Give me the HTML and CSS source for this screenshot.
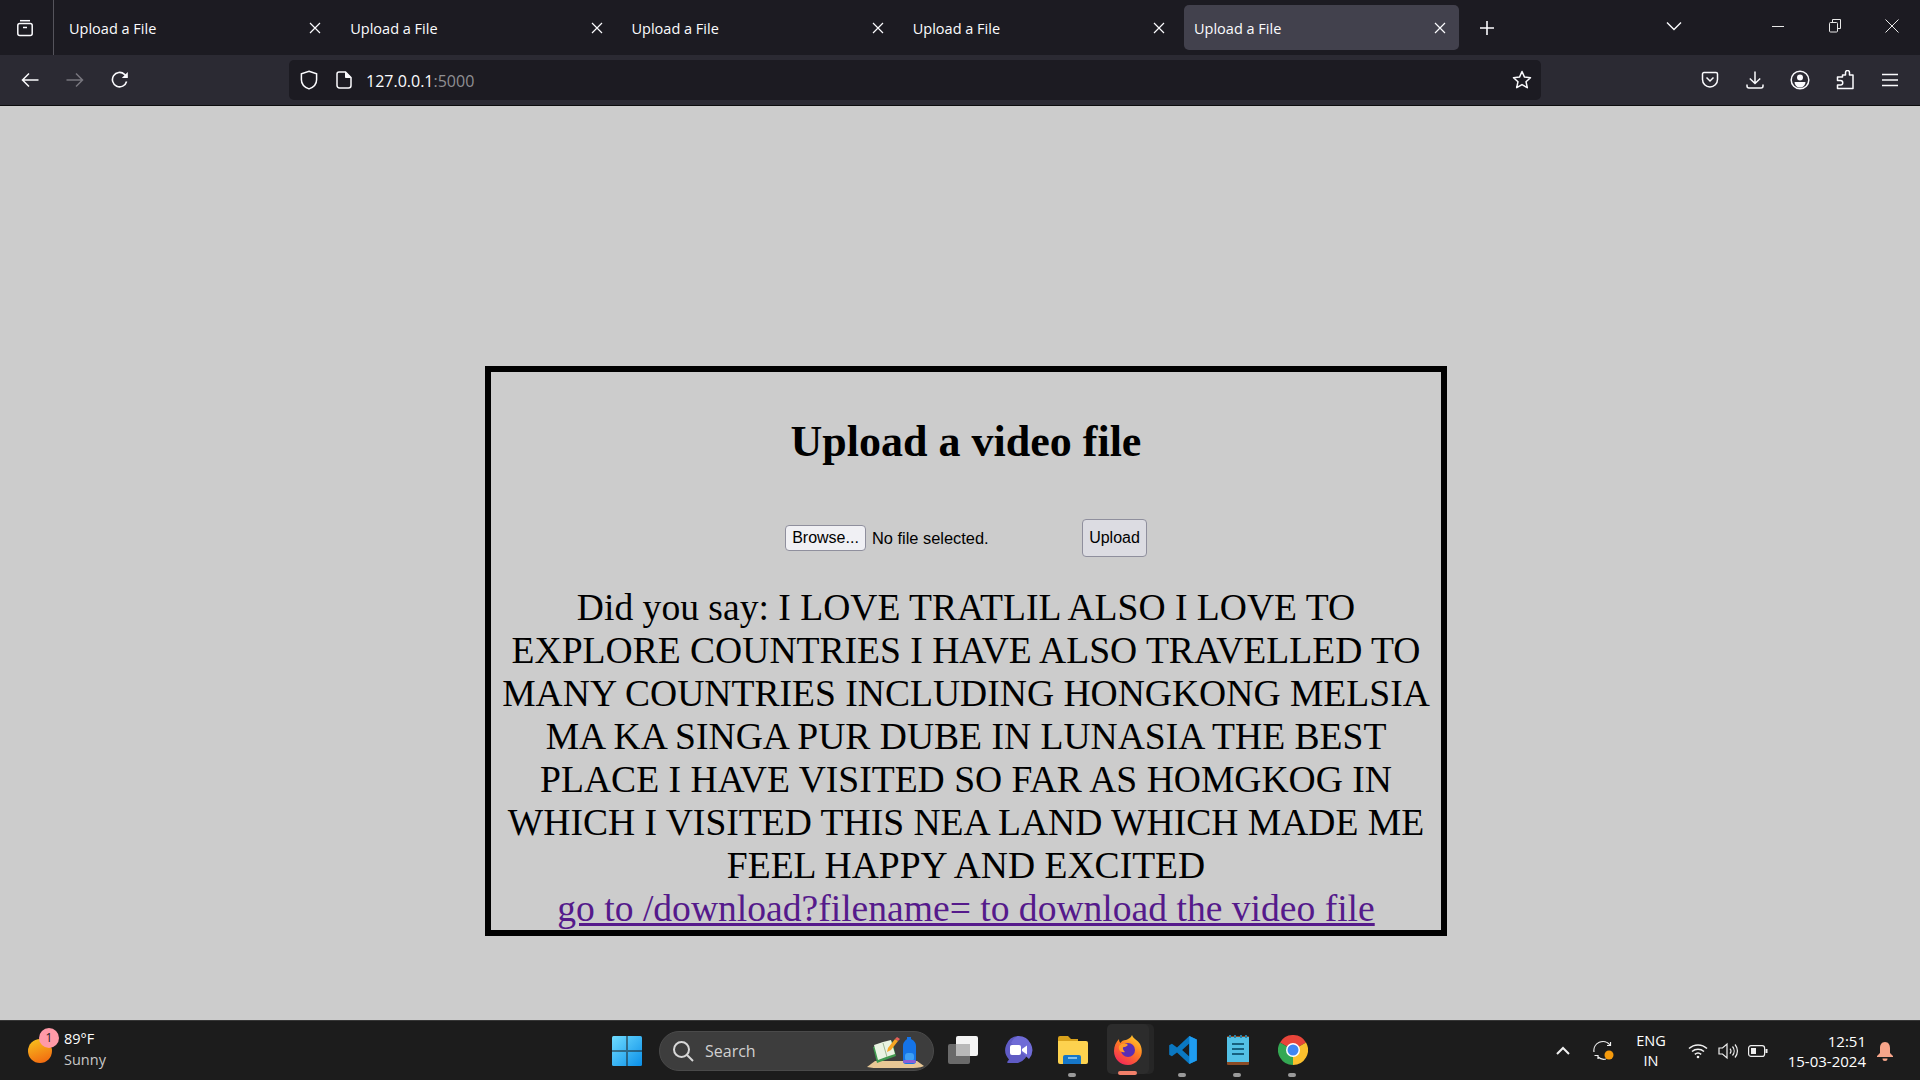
FILE: index.html
```html
<!DOCTYPE html>
<html lang="en">
<head>
    <meta charset="UTF-8">
    <title>Upload a File</title>
    <link rel="stylesheet" href="styles.css">
</head>
<body>
    <!-- tab strip -->
    <div class="tabbar">
        <div class="view-btn">
            <svg width="20" height="20" viewBox="0 0 20 20" fill="none" stroke="#fbfbfe" stroke-width="1.5"><path d="M5 2.7h10"/><rect x="2.8" y="5.5" width="14.4" height="12" rx="2"/><path d="M8 9.5h4"/></svg>
        </div>
        <div class="tabs">
            <div class="tab"><span>Upload a File</span><svg class="x" width="12" height="12" viewBox="0 0 12 12" stroke="#fbfbfe" stroke-width="1.2"><path d="M1 1l10 10M11 1L1 11"/></svg></div>
            <div class="tab"><span>Upload a File</span><svg class="x" width="12" height="12" viewBox="0 0 12 12" stroke="#fbfbfe" stroke-width="1.2"><path d="M1 1l10 10M11 1L1 11"/></svg></div>
            <div class="tab"><span>Upload a File</span><svg class="x" width="12" height="12" viewBox="0 0 12 12" stroke="#fbfbfe" stroke-width="1.2"><path d="M1 1l10 10M11 1L1 11"/></svg></div>
            <div class="tab"><span>Upload a File</span><svg class="x" width="12" height="12" viewBox="0 0 12 12" stroke="#fbfbfe" stroke-width="1.2"><path d="M1 1l10 10M11 1L1 11"/></svg></div>
            <div class="tab active"><span>Upload a File</span><svg class="x" width="12" height="12" viewBox="0 0 12 12" stroke="#fbfbfe" stroke-width="1.2"><path d="M1 1l10 10M11 1L1 11"/></svg></div>
        </div>
        <svg class="plus" width="16" height="16" viewBox="0 0 16 16" stroke="#fbfbfe" stroke-width="1.6"><path d="M8 1v14M1 8h14"/></svg>
        <svg class="chev" width="16" height="10" viewBox="0 0 16 10" fill="none" stroke="#fbfbfe" stroke-width="1.4"><path d="M1 1.5l7 7 7-7"/></svg>
        <div class="win-btns">
            <div class="win-btn"><svg width="12" height="12" viewBox="0 0 12 12" stroke="#e8e8e8"><path d="M0 6.5h12"/></svg></div>
            <div class="win-btn"><svg width="12" height="14" viewBox="0 0 12 14" fill="none" stroke="#e8e8e8"><path d="M3.5 3V.5h8v9H9"/><rect x=".5" y="3.5" width="8" height="9.5" rx="1"/></svg></div>
            <div class="win-btn"><svg width="14" height="14" viewBox="0 0 14 14" stroke="#e8e8e8"><path d="M.5.5l13 13M13.5.5l-13 13"/></svg></div>
        </div>
    </div>

    <!-- nav toolbar -->
    <div class="toolbar">
        <div class="tool"><svg width="18" height="16" viewBox="0 0 18 16" fill="none" stroke="#fbfbfe" stroke-width="1.5"><path d="M17.5 8H1.5M8 1.5L1.5 8 8 14.5"/></svg></div>
        <div class="tool"><svg width="18" height="16" viewBox="0 0 18 16" fill="none" stroke="#77767e" stroke-width="1.5"><path d="M.5 8h16M10 1.5L16.5 8 10 14.5"/></svg></div>
        <div class="tool"><svg width="18" height="18" viewBox="0 0 18 18" fill="none" stroke="#fbfbfe" stroke-width="1.6"><path d="M15.6 10.5A7.2 7.2 0 1 1 13.5 3.3L16 5.6"/><path d="M16.8 1v6h-6z" fill="#fbfbfe" stroke="none"/></svg></div>
        <div class="urlbar">
            <svg width="18" height="20" viewBox="0 0 18 20" fill="none" stroke="#fbfbfe" stroke-width="1.5"><path d="M9 1.2l7.6 2.5v6c0 4.6-3.2 7.6-7.6 9.2-4.4-1.6-7.6-4.6-7.6-9.2v-6z"/></svg>
            <svg class="page" width="16" height="18" viewBox="0 0 16 18" fill="none" stroke="#fbfbfe" stroke-width="1.5"><path d="M3 1h6.5L15 6.5V14.5a2.5 2.5 0 0 1-2.5 2.5h-9A2.5 2.5 0 0 1 1 14.5V3a2 2 0 0 1 2-2z"/><path d="M9.5 1v5.5H15" fill="#fbfbfe" stroke-width="1"/></svg>
            <span class="url">127.0.0.1<span class="port">:5000</span></span>
            <svg class="star" width="20" height="20" viewBox="0 0 20 20" fill="none" stroke="#fbfbfe" stroke-width="1.5" stroke-linejoin="round"><path d="M10 1.5l2.5 5.6 6 .6-4.5 4 1.3 6-5.3-3.1-5.3 3.1 1.3-6-4.5-4 6-.6z"/></svg>
        </div>
        <div class="tools-right">
            <div class="tool"><svg width="18" height="18" viewBox="0 0 18 18" fill="none" stroke="#fbfbfe" stroke-width="1.5"><path d="M3 1.5h12A1.5 1.5 0 0 1 16.5 3v5.5a7.5 7.5 0 0 1-15 0V3A1.5 1.5 0 0 1 3 1.5z"/><path d="M5.5 6.5L9 10l3.5-3.5"/></svg></div>
            <div class="tool"><svg width="18" height="18" viewBox="0 0 18 18" fill="none" stroke="#fbfbfe" stroke-width="1.5"><path d="M9 .5v12M3.8 7.5L9 12.5l5.2-5"/><path d="M1 13.5v1.5A2 2 0 0 0 3 17h12a2 2 0 0 0 2-2v-1.500"/></svg></div>
            <div class="tool"><svg width="20" height="20" viewBox="0 0 20 20" fill="none" stroke="#fbfbfe" stroke-width="1.5"><circle cx="10" cy="10" r="8.800"/><circle cx="10" cy="7.500" r="3" fill="#fbfbfe" stroke="none"/><path d="M4.500 12h11a5.500 5.500 0 0 1-11 0z" fill="#fbfbfe" stroke="none"/></svg></div>
            <div class="tool"><svg width="18" height="20" viewBox="0 0 18 20" fill="none" stroke="#fbfbfe" stroke-width="1.5" stroke-linejoin="round"><path d="M6.500 5h3V2.500a2 2 0 0 1 4 0V5h3.500v13.500H1.500V15h3a2 2 0 0 0 0-4.500h-3V7h5z"/></svg></div>
            <div class="tool"><svg width="16" height="14" viewBox="0 0 16 14" stroke="#fbfbfe" stroke-width="1.5"><path d="M0 1.500h16M0 7h16M0 12.500h16"/></svg></div>
        </div>
    </div>

    <!-- page content -->
    <div class="page-area">
        <div class="upload-box">
            <h1>Upload a video file</h1>
            <form class="upload-form">
                <button type="button" class="browse">Browse...</button>
                <span class="no-file">No file selected.</span>
                <button type="button" class="submit">Upload</button>
            </form>
            <p class="result">Did you say: I LOVE TRATLIL ALSO I LOVE TO EXPLORE COUNTRIES I HAVE ALSO TRAVELLED TO MANY COUNTRIES INCLUDING HONGKONG MELSIA MA KA SINGA PUR DUBE IN LUNASIA THE BEST PLACE I HAVE VISITED SO FAR AS HOMGKOG IN WHICH I VISITED THIS NEA LAND WHICH MADE ME FEEL HAPPY AND EXCITED<br><a href="#">go to /download?filename= to download the video file</a></p>
        </div>
    </div>

    <!-- windows taskbar -->
    <div class="taskbar">
        <div class="weather">
            <div class="sun"></div>
            <div class="badge">1</div>
            <div class="weather-text">
                <div>89°F</div>
                <div class="sunny">Sunny</div>
            </div>
        </div>
        <svg class="winlogo" width="30" height="30" viewBox="0 0 30 30">
            <defs>
                <linearGradient id="wg" x1="0" y1="0" x2="1" y2="1"><stop offset="0" stop-color="#6fdcff"/><stop offset="1" stop-color="#0a8fe8"/></linearGradient>
            </defs>
            <rect width="30" height="30" rx="1.500" fill="url(#wg)"/>
            <path d="M14.500 0v30h1V0zM0 14.500h30v1H0z" fill="#1c1c1c"/>
        </svg>
        <div class="search">
            <svg width="22" height="22" viewBox="0 0 22 22" fill="none" stroke="#d8d8d8" stroke-width="2"><circle cx="9.500" cy="9.500" r="7.500"/><path d="M15 15l6 6"/></svg>
            <span>Search</span>
            <svg class="search-art" width="58" height="32" viewBox="0 0 58 32">
                <path d="M8 25h42l7 5c-4 2-10 2-14 2H14c-5 0-10 0-14-1z" fill="#e8c795"/>
                <path d="M6 11l19-6 4 15-19 7z" fill="#3f9a4f"/>
                <path d="M7 9l9-3 8-2 4 14-9 3-8 3z" fill="#e9f3e2"/>
                <path d="M16 7l4 14" stroke="#9db894" fill="none"/>
                <path d="M21 12l7-9 3 2-7 9-4 2z" fill="#f6a623"/>
                <path d="M28 3l2-2 3 2-2 2z" fill="#e8605a"/>
                <path d="M36 10c0-4 3-6 4-7V1h4v2c2 1 5 3 5 7v15c0 2-1 3-3 3h-7c-2 0-3-1-3-3z" fill="#1574e8"/>
                <rect x="38" y="17" width="9" height="8" rx="3" fill="#3fa0f5"/>
                <rect x="36" y="24" width="13" height="3" rx="1.500" fill="#8a5fd8"/>
            </svg>
        </div>
        <div class="apps">
            <div class="app">
                <svg width="30" height="28" viewBox="0 0 30 28"><rect x="8" width="22" height="20" rx="2" fill="#f4f4f4"/><rect y="8" width="22" height="20" rx="2" fill="#6a6a6a"/><rect x="8" y="8" width="14" height="12" fill="#b9b9b9"/></svg>
            </div>
            <div class="app">
                <svg width="30" height="30" viewBox="0 0 30 30"><path d="M15 1a14 14 0 0 1 0 27H5c-1 0-1-1-.5-1.500l1.500-2A14 14 0 0 1 15 1z" fill="#5f5bc4"/><path d="M15 1a14 14 0 0 1 11 23L8 8a14 14 0 0 1 7-7z" fill="#6f6bd6"/><rect x="7" y="10" width="11" height="10" rx="2" fill="#fff"/><path d="M19 14l5-3.500v9L19 16z" fill="#fff"/></svg>
            </div>
            <div class="app">
                <svg width="30" height="28" viewBox="0 0 30 28"><path d="M0 2a2 2 0 0 1 2-2h8l3 3h7v6H0z" fill="#d9a21c"/><path d="M0 5h28a2 2 0 0 1 2 2v19a2 2 0 0 1-2 2H2a2 2 0 0 1-2-2z" fill="#fdd24f"/><path d="M5 28v-7a2 2 0 0 1 2-2h14a2 2 0 0 1 2 2v7z" fill="#1677c9"/><path d="M10 22h9" stroke="#a8d7f5" stroke-width="1.500"/></svg>
                <div class="dot"></div>
            </div>
            <div class="app app-open">
                <svg width="30" height="30" viewBox="0 0 30 30">
                    <defs>
                        <linearGradient id="fg" x1="0.800" y1="0" x2="0.200" y2="1"><stop offset="0" stop-color="#ffcf2d"/><stop offset="0.450" stop-color="#ff7a22"/><stop offset="1" stop-color="#f3225c"/></linearGradient>
                    </defs>
                    <path d="M19 0c1 4 6 5 8 9 3 6 2 12-1 15-3 4-7 6-11 6C7 30 1 24 1 16 1 11 3 7 6 4c0 2 .5 3 1.500 4 1-2 3-3 5.500-3 2-1 5-2 6-5z" fill="url(#fg)"/>
                    <circle cx="15" cy="15" r="7" fill="#5a2db4"/>
                    <path d="M6 11c2-3 6-3 8-2 2 1-1 3-3 3s-1 3 1 5c-4 1-7-2-6-6z" fill="#ff9a2a"/>
                </svg>
                <div class="open-line"></div>
            </div>
            <div class="app">
                <svg width="30" height="30" viewBox="0 0 100 100"><path d="M71 3L30 42 13 29l-9 5v32l9 5 17-13 41 39 25-12V15zM71 28v44L47 50z" fill="#0a78c2" fill-rule="evenodd"/><path d="M71 3l25 12v70L71 97z" fill="#1f9cf0"/></svg>
                <div class="dot"></div>
            </div>
            <div class="app">
                <svg width="22" height="30" viewBox="0 0 22 30"><rect y="1" width="22" height="29" rx="1" fill="#8b4b25"/><rect y="2" width="22" height="25" fill="#53c1e6"/><path d="M3 0v3M8 0v3M14 0v3M19 0v3" stroke="#2a7fa3" stroke-width="2"/><path d="M5 9h12M5 14h12M5 19h12" stroke="#17607f" stroke-width="2"/></svg>
                <div class="dot"></div>
            </div>
            <div class="app">
                <svg width="30" height="30" viewBox="0 0 30 30"><path d="M15 15L2 7.500A15 15 0 0 1 28 7.500z" fill="#e8453a"/><path d="M15 15l13-7.500A15 15 0 0 1 15 30z" fill="#fbc02d"/><path d="M15 15v15A15 15 0 0 1 2 7.500z" fill="#34a853"/><circle cx="15" cy="15" r="7" fill="#fff"/><circle cx="15" cy="15" r="5.500" fill="#3f86f4"/></svg>
                <div class="dot"></div>
            </div>
        </div>
        <div class="tray">
            <svg class="tray-chev" width="14" height="9" viewBox="0 0 14 9" fill="none" stroke="#f0f0f0" stroke-width="2"><path d="M1 8l6-6 6 6"/></svg>
            <svg class="sync" width="22" height="22" viewBox="0 0 22 22" fill="none" stroke="#f0f0f0" stroke-width="1.200"><path d="M1 12a9 9 0 0 1 16-7M14 5.500h3.500V2"/><path d="M13 19a9 9 0 0 1-8-2M1.500 15.500H5V19"/><circle cx="16" cy="15" r="4.500" fill="#f59a0c" stroke="none"/></svg>
            <div class="lang"><div>ENG</div><div>IN</div></div>
            <svg class="wifi" width="20" height="16" viewBox="0 0 20 16" fill="none" stroke="#f0f0f0" stroke-width="1.500"><path d="M1 5.500a13 13 0 0 1 18 0M4 8.500a9 9 0 0 1 12 0M6.800 11.300a5 5 0 0 1 6.400 0"/><circle cx="10" cy="14" r="1.300" fill="#f0f0f0" stroke="none"/></svg>
            <svg class="vol" width="20" height="18" viewBox="0 0 20 18" fill="none" stroke="#f0f0f0" stroke-width="1.200"><path d="M1 6h3.500L9 2v14l-4.500-4H1z"/><path d="M12 6.500a4 4 0 0 1 0 5M14.500 4.500a7 7 0 0 1 0 9M17 2.500a10 10 0 0 1 0 13"/></svg>
            <svg class="batt" width="20" height="12" viewBox="0 0 20 12" fill="none" stroke="#f0f0f0" stroke-width="1.200"><rect x=".6" y=".6" width="16" height="10.800" rx="2.500"/><rect x="3" y="3" width="5" height="6" fill="#f0f0f0" stroke="none"/><path d="M18.500 4v4" stroke-width="2"/></svg>
            <div class="clock"><div>12:51</div><div>15-03-2024</div></div>
            <svg class="bell" width="16" height="19" viewBox="0 0 16 19"><path d="M8 0c3.500 0 5 3 5 6v5l3 3v1H0v-1l3-3V6c0-3 1.500-6 5-6z" fill="#f7a58a"/><path d="M5.500 16.500h5a2.500 2.500 0 0 1-5 0z" fill="#f7a58a"/></svg>
        </div>
    </div>
</body>
</html>
```

FILE: styles.css
```css
html, body {
    margin: 0;
    height: 100%;
}
body {
    display: flex;
    flex-direction: column;
    height: 100vh;
    overflow: hidden;
    background-color: #cccccc;
    font-family: "Open Sans", "Noto Sans", sans-serif;
}

/* tab strip */
.tabbar {
    display: flex;
    align-items: center;
    height: 55px;
    flex-shrink: 0;
    background-color: #1c1b22;
    color: #fbfbfe;
}
.view-btn {
    width: 54px;
    height: 55px;
    display: flex;
    align-items: center;
    justify-content: center;
    padding-right: 3px;
    box-sizing: border-box;
    border-right: 1px solid #55545c;
}
.tabs {
    display: flex;
    gap: 6px;
    margin-left: 5px;
}
.tab {
    width: 275.25px;
    height: 45px;
    padding: 1px 13px 0 10px;
    box-sizing: border-box;
    display: flex;
    align-items: center;
    justify-content: space-between;
    border-radius: 5px;
    font-size: 14.5px;
}
.tab.active {
    background-color: #42414d;
}
.tab .x {
    flex-shrink: 0;
}
.plus {
    margin-left: 20px;
}
.chev {
    margin-left: 171px;
    margin-bottom: 3px;
}
.win-btns {
    margin-left: auto;
    display: flex;
}
.win-btn {
    width: 56.7px;
    height: 55px;
    display: flex;
    align-items: center;
    justify-content: center;
    padding-bottom: 3px;
    box-sizing: border-box;
}

/* toolbar */
.toolbar {
    display: flex;
    align-items: center;
    height: 51px;
    flex-shrink: 0;
    padding: 0 8px 0 7.5px;
    box-sizing: border-box;
    background-color: #2b2a33;
    border-bottom: 1px solid #0c0c0d;
}
.tool {
    width: 45px;
    height: 40px;
    display: flex;
    align-items: center;
    justify-content: center;
}
.urlbar {
    width: 1252px;
    height: 40px;
    margin-left: 146.5px;
    padding: 0 9px 0 11px;
    box-sizing: border-box;
    display: flex;
    align-items: center;
    background-color: #1c1b22;
    border-radius: 5px;
}
.page {
    margin-left: 18px;
}
.url {
    margin: 2px 0 0 14px;
    color: #fbfbfe;
    font-size: 16px;
}
.port {
    color: #8f8f93;
}
.star {
    margin-left: auto;
}
.tools-right {
    display: flex;
    margin-left: auto;
}

/* page */
.page-area {
    flex: 1;
    min-height: 0;
}
.upload-box {
    width: 962px;
    height: 570px;
    margin: 260px 0 0 485px;
    box-sizing: border-box;
    border: 6px solid #000;
    font-family: "Liberation Serif", serif;
    text-align: center;
    color: #000;
}
.upload-box h1 {
    margin: 0;
    padding-top: 45px;
    font-size: 44px;
    line-height: 50px;
}
.upload-form {
    display: flex;
    align-items: center;
    margin: 52px 0 0 294px;
    font-family: "Liberation Sans", sans-serif;
    font-size: 16px;
}
.browse {
    width: 81px;
    height: 26px;
    padding: 0;
    border: 1px solid #8f8f9d;
    border-radius: 4px;
    background-color: #f0f0f4;
    font: inherit;
    color: #000;
}
.no-file {
    width: 210px;
    margin-left: 6px;
    text-align: left;
    font-size: 16.4px;
}
.submit {
    width: 65px;
    height: 38px;
    padding: 0;
    border: 1px solid #8f8f9d;
    border-radius: 4px;
    background-color: #dcdce2;
    font: inherit;
    color: #000;
}
.result {
    margin: 29px 0 0;
    font-size: 37.6px;
    line-height: 43px;
}
.result a {
    color: #551a8b;
}

/* taskbar */
.taskbar {
    position: relative;
    display: flex;
    align-items: center;
    height: 60px;
    flex-shrink: 0;
    background-color: #1c1c1c;
    border-top: 1px solid #363636;
    box-sizing: border-box;
    color: #fff;
}
.weather {
    position: relative;
    width: 612px;
    height: 100%;
    display: flex;
    align-items: center;
    padding-left: 28px;
    box-sizing: border-box;
}
.sun {
    width: 24px;
    height: 24px;
    border-radius: 50%;
    background: linear-gradient(160deg, #f7c51e, #f2610f);
}
.badge {
    position: absolute;
    left: 39px;
    top: 7px;
    width: 20px;
    height: 20px;
    border-radius: 50%;
    background-color: #ff9aa8;
    color: #222;
    font-size: 12px;
    line-height: 20px;
    text-align: center;
}
.weather-text {
    margin: -3px 0 0 12px;
    font-size: 14.5px;
    line-height: 21px;
}
.sunny {
    color: #c8c8c8;
}
.winlogo {
    flex-shrink: 0;
}
.search {
    width: 275px;
    height: 40px;
    margin-left: 17px;
    padding: 0 8px 0 12px;
    box-sizing: border-box;
    display: flex;
    align-items: center;
    background-color: #3d3d3d;
    border: 1px solid #4a4a4a;
    border-radius: 20px;
    color: #d0d0d0;
    font-size: 16px;
}
.search span {
    margin-left: 11px;
}
.search-art {
    margin-left: auto;
    margin-top: 3px;
}
.apps {
    display: flex;
    margin-left: 1px;
}
.app {
    position: relative;
    width: 55px;
    height: 59px;
    display: flex;
    align-items: center;
    justify-content: center;
}
.app-open::before {
    content: "";
    position: absolute;
    left: 7px;
    top: 3px;
    width: 42px;
    height: 50px;
    background-color: #2c2c2c;
    border-radius: 5px;
    box-shadow: 5px 0 0 #262626;
}
.app svg {
    position: relative;
    margin-bottom: 2px;
}
.dot {
    position: absolute;
    left: 23px;
    bottom: 3px;
    width: 8px;
    height: 4px;
    border-radius: 2px;
    background-color: #9a9a9a;
}
.open-line {
    position: absolute;
    left: 18px;
    bottom: 5px;
    width: 19px;
    height: 4px;
    border-radius: 2px;
    background-color: #f2806a;
}

/* system tray */
.tray {
    margin-left: auto;
    display: flex;
    align-items: center;
    padding-right: 54px;
    font-size: 14px;
}
.sync {
    margin-left: 23px;
}
.lang {
    width: 40px;
    margin-left: 16px;
    text-align: center;
    line-height: 20px;
    font-size: 14.5px;
}
.wifi {
    margin-left: 17px;
}
.vol {
    margin-left: 10px;
}
.batt {
    margin-left: 10px;
}
.clock {
    width: 90px;
    margin-left: 8px;
    text-align: right;
    line-height: 20px;
    font-size: 15px;
}
.bell {
    position: absolute;
    right: 27px;
    top: 21px;
}
```
